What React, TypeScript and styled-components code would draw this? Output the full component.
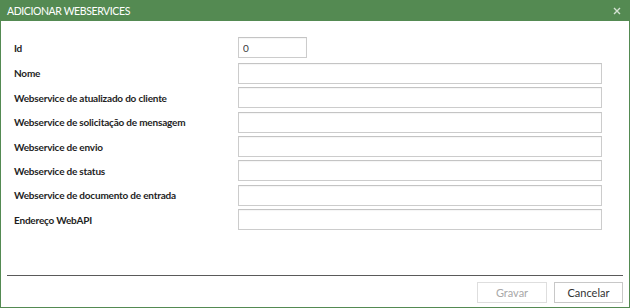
import React from 'react';
import styled, { createGlobalStyle } from 'styled-components';

const GlobalStyle = createGlobalStyle`
  html, body {
    margin: 0;
    padding: 0;
    background: #ffffff;
  }
  * {
    box-sizing: border-box;
  }
`;

const Window = styled.div`
  width: 630px;
  height: 308px;
  display: flex;
  flex-direction: column;
  background: #ffffff;
  border: 1px solid #548a52;
  border-top: none;
  font-family: 'Lato', 'Open Sans', sans-serif;
`;

const TitleBar = styled.div`
  height: 21px;
  margin: 0 -1px;
  padding: 0 8px 0 7px;
  background: #548a52;
  color: #ffffff;
  display: flex;
  align-items: center;
  justify-content: space-between;
  font-size: 10.5px;
`;

const Title = styled.span`
  letter-spacing: -0.4px;
`;

const CloseButton = styled.button`
  border: none;
  background: transparent;
  padding: 0;
  width: 10px;
  height: 10px;
  display: flex;
  align-items: center;
  justify-content: center;
  cursor: pointer;
`;

const Form = styled.div`
  display: flex;
  flex-direction: column;
  gap: 3.4px;
  padding: 16px 27px 0 13px;
`;

const Row = styled.div<{ $first?: boolean }>`
  display: flex;
  align-items: center;
  margin-bottom: ${p => (p.$first ? '1.5px' : '0')};
`;

const Label = styled.label`
  width: 224px;
  flex-shrink: 0;
  font-size: 10px;
  font-weight: 700;
  letter-spacing: -0.2px;
  color: #1e1e1e;
`;

const Input = styled.input<{ $short?: boolean }>`
  height: 21px;
  width: ${p => (p.$short ? '69px' : '364px')};
  border: 1px solid #cccccc;
  border-top-color: #c4c4c4;
  box-shadow: inset 0 1px 1px rgba(0, 0, 0, 0.04);
  padding: 0 4px;
  font-family: 'Lato', 'Open Sans', sans-serif;
  font-size: 10px;
  color: #3a3a3a;
  outline: none;
`;

const Footer = styled.div`
  margin: auto 6px 0 6px;
  border-top: 1px solid #5a5a5a;
  padding: 6px 0 4px 0;
  display: flex;
  justify-content: flex-end;
  gap: 7px;
`;

const Button = styled.button<{ $disabled?: boolean }>`
  height: 21px;
  width: ${p => (p.$disabled ? '70px' : '69px')};
  background: #ffffff;
  border: 1px solid ${p => (p.$disabled ? '#dedede' : '#c8c8c8')};
  color: ${p => (p.$disabled ? '#a8a8a8' : '#333333')};
  font-family: 'Lato', 'Open Sans', sans-serif;
  font-size: 11px;
  padding: 0;
  cursor: ${p => (p.$disabled ? 'default' : 'pointer')};
`;

const fields = [
  'Nome',
  'Webservice de atualizado do cliente',
  'Webservice de solicitação de mensagem',
  'Webservice de envio',
  'Webservice de status',
  'Webservice de documento de entrada',
  'Endereço WebAPI',
];

export default function App() {
  return (
    <>
      <GlobalStyle />
      <Window>
        <TitleBar>
          <Title>ADICIONAR WEBSERVICES</Title>
          <CloseButton aria-label="Fechar">
            <svg width="8" height="8" viewBox="0 0 8 8">
              <path d="M1 1 L7 7 M7 1 L1 7" stroke="rgba(255,255,255,0.75)" strokeWidth="1.4" />
            </svg>
          </CloseButton>
        </TitleBar>
        <Form>
          <Row $first>
            <Label>Id</Label>
            <Input $short defaultValue="0" />
          </Row>
          {fields.map(f => (
            <Row key={f}>
              <Label>{f}</Label>
              <Input />
            </Row>
          ))}
        </Form>
        <Footer>
          <Button $disabled disabled>Gravar</Button>
          <Button>Cancelar</Button>
        </Footer>
      </Window>
    </>
  );
}
